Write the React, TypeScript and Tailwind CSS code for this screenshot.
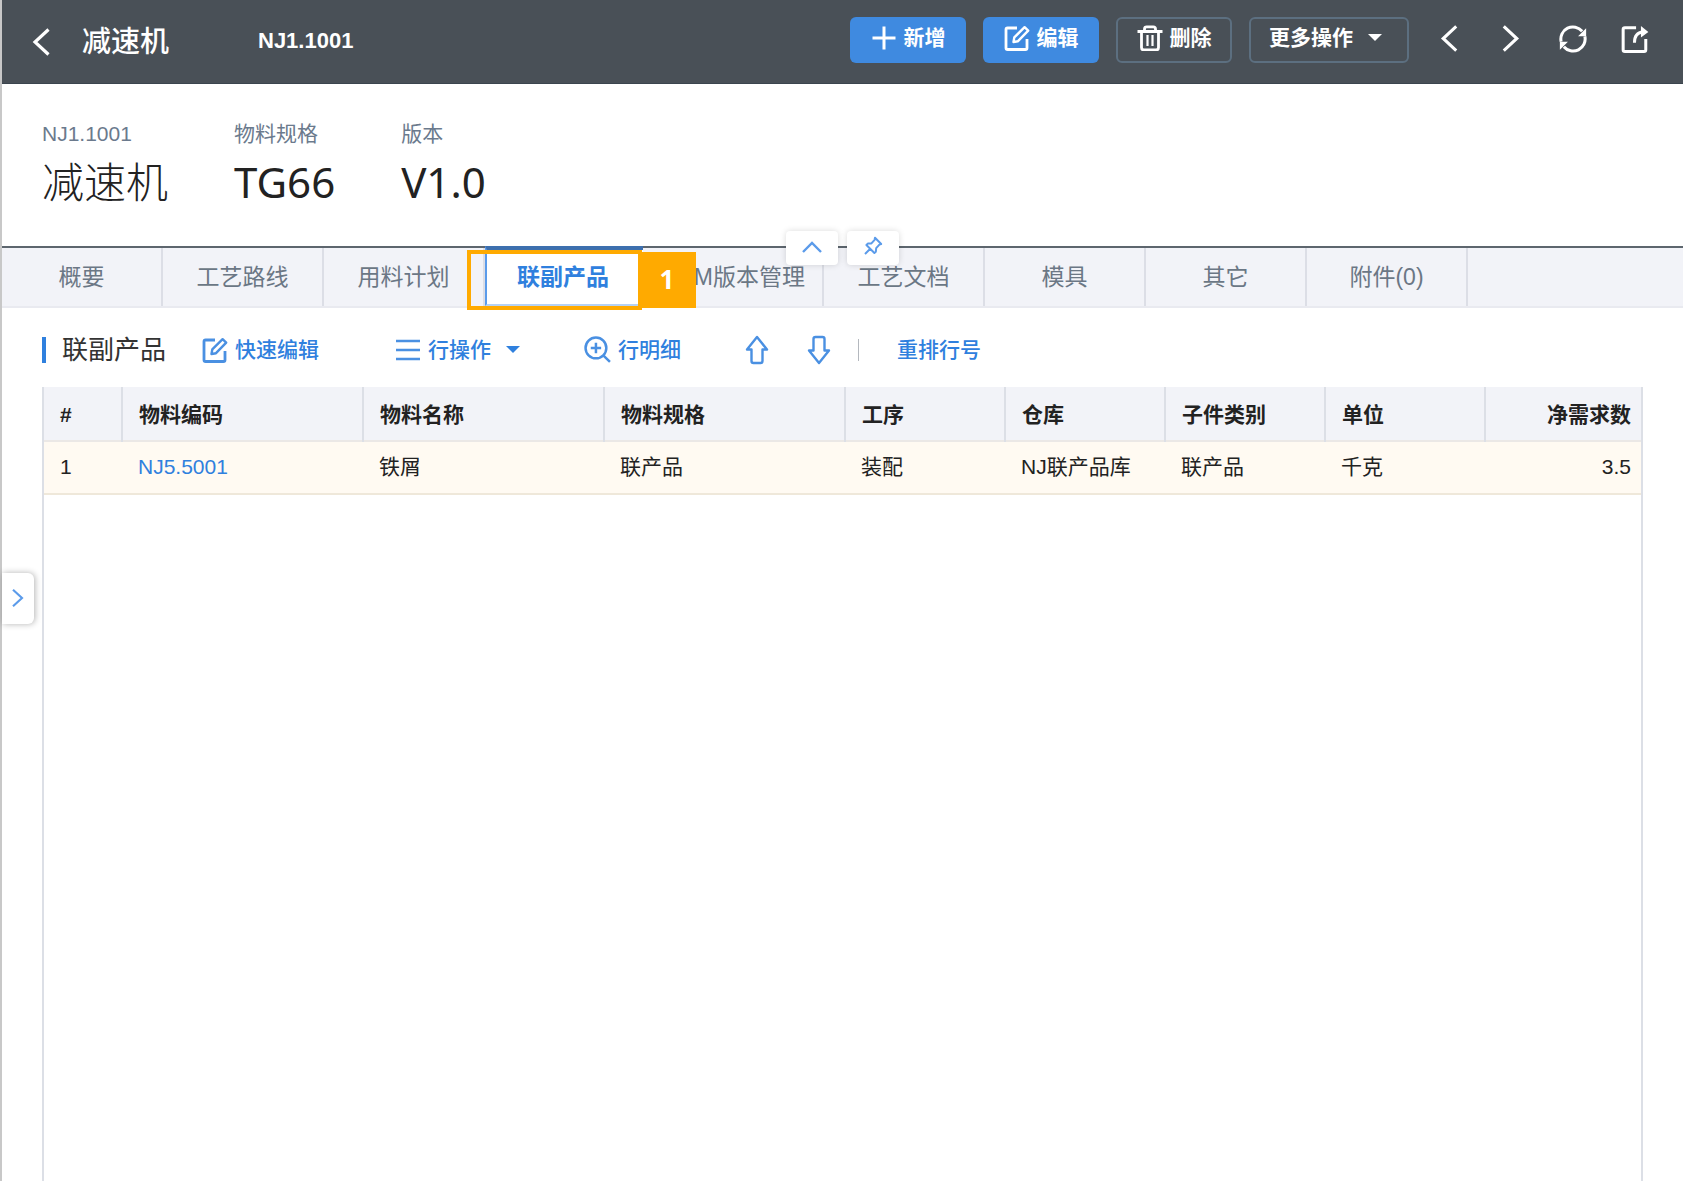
import React from "react";

type IconProps = { className?: string };

const svgBase = {
  fill: "none",
  stroke: "currentColor",
  viewBox: "0 0 26 26",
  "aria-hidden": true,
} as const;

const PlusIcon = ({ className = "" }: IconProps) => (
  <svg {...svgBase} strokeWidth="3" className={`size-[26px] shrink-0 ${className}`}>
    <path d="M13 1.5v23M1.5 13h23" />
  </svg>
);

const EditIcon = ({ className = "" }: IconProps) => (
  <svg {...svgBase} strokeWidth="2.8" strokeLinejoin="round" className={`size-[26px] shrink-0 ${className}`}>
    <path d="M13 3H3.6Q2 3 2 4.600V22.900Q2 24.500 3.600 24.500H21.400Q23 24.500 23 22.900V14" />
    <path d="M9.500 17l.8-4.600L20.600 2.200l3.600 3.400L14 16.200z" strokeWidth="2.400" />
  </svg>
);

const TrashIcon = ({ className = "" }: IconProps) => (
  <svg {...svgBase} strokeWidth="2.8" strokeLinejoin="round" className={`size-[26px] shrink-0 ${className}`}>
    <path d="M0.500 6.500h25M7.500 6V4Q7.500 1.800 9.700 1.800h6.600q2.200 0 2.200 2.200v2M4.500 7v15.500Q4.500 25 7 25h12q2.500 0 2.500-2.500V7" />
    <path d="M10.500 10v11M15.500 10v11" strokeWidth="2.200" />
  </svg>
);

const ChevronLeft = ({ className = "" }: IconProps) => (
  <svg {...svgBase} viewBox="0 0 18 28" strokeWidth="3.2" className={`shrink-0 ${className}`}>
    <path d="M16.500 1.500L3 14l13.500 12.500" />
  </svg>
);

const ChevronRight = ({ className = "" }: IconProps) => (
  <svg {...svgBase} viewBox="0 0 18 28" strokeWidth="3.2" className={`shrink-0 ${className}`}>
    <path d="M1.500 1.500L15 14 1.500 26.500" />
  </svg>
);

const RefreshIcon = ({ className = "" }: IconProps) => (
  <svg {...svgBase} strokeWidth="2.800" className={`size-[28px] shrink-0 ${className}`}>
    <path d="M2 15.500A11.200 11.200 0 0 1 21.500 5.800M24 10.500A11.200 11.200 0 0 1 4.500 20.200" />
    <path d="M25.200 3v7.500h-7.500zM.8 23v-7.500h7.500z" fill="currentColor" stroke="none" />
  </svg>
);

const ShareIcon = ({ className = "" }: IconProps) => (
  <svg {...svgBase} strokeWidth="2.800" strokeLinejoin="round" className={`size-[28px] shrink-0 ${className}`}>
    <path d="M14 2.500H3.600Q2 2.500 2 4.100V22.900Q2 24.500 3.600 24.500H21.400Q23 24.500 23 22.900V13" />
    <path d="M12.500 16.500q0-9.500 8-10" />
    <path d="M18.500 1l6.900 5.500-6.900 5.200z" fill="currentColor" stroke="none" />
  </svg>
);

const ListIcon = ({ className = "" }: IconProps) => (
  <svg {...svgBase} strokeWidth="2.400" className={`size-[26px] shrink-0 ${className}`}>
    <path d="M1 4h24M1 13h24M1 22h24" />
  </svg>
);

const DetailIcon = ({ className = "" }: IconProps) => (
  <svg {...svgBase} strokeWidth="2.400" className={`size-[27px] shrink-0 ${className}`}>
    <circle cx="11.500" cy="11.500" r="10" />
    <path d="M18.800 18.800l6.200 6.200M11.500 6.500v10M6.500 11.500h10" />
  </svg>
);

const ArrowUpIcon = ({ className = "" }: IconProps) => (
  <svg {...svgBase} viewBox="0 0 24 30" strokeWidth="2.400" strokeLinejoin="round" className={`h-[30px] w-6 shrink-0 ${className}`}>
    <path d="M12 2L22 14.500h-4.500V26q0 2-2 2h-7q-2 0-2-2V14.500H2z" />
  </svg>
);

const PinIcon = ({ className = "" }: IconProps) => (
  <svg {...svgBase} viewBox="0 0 20 20" strokeWidth="2" strokeLinejoin="round" className={`size-5 shrink-0 ${className}`}>
    <path d="M12 1.800l6.200 6.200-1.800.6-3.200 3.600-.4 3.600-1.400 1.200-8-8 1.400-1.400 3.600-.2 3.200-3.600zM7 13l-5 5" />
  </svg>
);

const Caret = ({ className = "" }: IconProps) => (
  <svg viewBox="0 0 14 7" fill="currentColor" aria-hidden className={`h-[7px] w-3.5 shrink-0 ${className}`}>
    <path d="M0 0h14L7 7z" />
  </svg>
);

const tabs = [
  { label: "概要" },
  { label: "工艺路线" },
  { label: "用料计划" },
  { label: "联副产品", active: true },
  { label: "M版本管理", wide: true },
  { label: "工艺文档" },
  { label: "模具" },
  { label: "其它" },
  { label: "附件(0)" },
];

const columns = [
  { title: "#", value: "1", width: "w-[78px]" },
  { title: "物料编码", value: "NJ5.5001", width: "w-[241px]", link: true },
  { title: "物料名称", value: "铁屑", width: "w-[241px]" },
  { title: "物料规格", value: "联产品", width: "w-[241px]" },
  { title: "工序", value: "装配", width: "w-40" },
  { title: "仓库", value: "NJ联产品库", width: "w-40" },
  { title: "子件类别", value: "联产品", width: "w-40" },
  { title: "单位", value: "千克", width: "w-40" },
  { title: "净需求数", value: "3.5", width: "", right: true },
];

const facts = [
  { label: "NJ1.1001", value: "减速机", weight: "font-light" },
  { label: "物料规格", value: "TG66", weight: "font-normal" },
  { label: "版本", value: "V1.0", weight: "font-normal" },
];

function Header() {
  return (
    <header className="flex h-[84px] items-center border-b border-[#3b454e] bg-[#495057] pr-[34px] pl-[30px] text-white">
      <button type="button" aria-label="返回" className="mr-8">
        <ChevronLeft className="h-7 w-[18px]" />
      </button>
      <h1 className="w-44 text-[29px] leading-9 font-medium">减速机</h1>
      <span className="pb-0.5 text-[22px] leading-7 font-bold">NJ1.1001</span>
      <div className="ml-auto flex items-center pb-1 text-[21px] leading-6 font-bold">
        <button type="button" className="mr-[17px] flex h-[46px] w-[116px] items-center justify-center gap-[7px] rounded-md bg-[#3f8ae0] pb-1">
          <PlusIcon />
          新增
        </button>
        <button type="button" className="mr-[17px] flex h-[46px] w-[116px] items-center justify-center gap-[7px] rounded-md bg-[#3f8ae0] pb-1">
          <EditIcon />
          编辑
        </button>
        <button type="button" className="mr-[17px] flex h-[46px] w-[116px] items-center justify-center gap-[7px] rounded-md border-2 border-[#5c6f80] pb-1">
          <TrashIcon />
          删除
        </button>
        <button type="button" className="flex h-[46px] w-40 items-center gap-[15px] rounded-md border-2 border-[#5c6f80] pb-1 pl-[18px]">
          更多操作
          <Caret />
        </button>
        <div className="ml-[31px] flex items-center pb-0.5">
          <button type="button" aria-label="上一条">
            <ChevronLeft className="h-[27px] w-[18px]" />
          </button>
          <button type="button" aria-label="下一条" className="ml-11">
            <ChevronRight className="h-[27px] w-[18px]" />
          </button>
          <button type="button" aria-label="刷新" className="ml-[39px]">
            <RefreshIcon />
          </button>
          <button type="button" aria-label="在新窗口打开" className="ml-[34px]">
            <ShareIcon />
          </button>
        </div>
      </div>
    </header>
  );
}

function Summary() {
  return (
    <section className="relative h-[162px] pt-9 pl-10">
      <dl className="flex gap-[66px]">
        {facts.map((f) => (
          <div key={f.label}>
            <dt className="text-[21px] leading-7 text-[#6b7a8d]">{f.label}</dt>
            <dd className={`mt-2 font-['Noto_Sans','Noto_Sans_CJK_SC',sans-serif] text-[42px] leading-[52px] text-[#222] ${f.weight}`}>{f.value}</dd>
          </div>
        ))}
      </dl>
      <div className="absolute -bottom-[19px] left-[784px] z-10 flex gap-[9px] text-[#5b9bea]">
        <button type="button" aria-label="收起" className="grid h-[34px] w-[52px] place-items-center rounded bg-white pb-0.5 shadow-[0_0_6px_rgba(0,0,0,0.15)]">
          <svg viewBox="0 0 20 12" fill="none" stroke="currentColor" strokeWidth="2.400" aria-hidden className="h-3 w-5">
            <path d="M1 11l9-9 9 9" />
          </svg>
        </button>
        <button type="button" aria-label="固定" className="grid h-[34px] w-[52px] place-items-center rounded bg-white pb-1 shadow-[0_0_6px_rgba(0,0,0,0.15)]">
          <PinIcon />
        </button>
      </div>
    </section>
  );
}

function Tabs() {
  return (
    <nav role="tablist" className="flex h-[62px] border-t-2 border-b-2 border-t-[#5d666e] border-b-[#e9eaf0] bg-[#f2f3f8] text-[23px] text-[#6b7785]">
      {tabs.map((t) =>
        t.active ? (
          <div key={t.label} className="relative w-[158px] shrink-0">
            <button type="button" role="tab" aria-selected="true" className="-mt-0.5 h-[60px] w-full border-t-4 border-b-2 border-l-2 border-t-[#3d6fae] border-b-[#b5d2f5] border-l-[#5b9bea] bg-white pr-1 font-bold text-[#2f80de]">
              {t.label}
            </button>
            <div className="pointer-events-none absolute top-0.5 -left-[18px] h-[60px] w-[175px] border-4 border-[#ffaa00]" />
            <div className="pointer-events-none absolute top-1 left-[153px] grid h-14 w-[58px] place-items-center bg-[#ffaa00] pb-0.5 font-['Open_Sans',sans-serif] text-[26px] font-bold text-white">
              1
            </div>
          </div>
        ) : (
          <button
            key={t.label}
            type="button"
            role="tab"
            aria-selected="false"
            className={`shrink-0 border-r-2 border-[#dcdee6] ${t.wide ? "w-[181px] pr-[17px] text-right" : "w-[161px]"}`}
          >
            {t.label}
          </button>
        ),
      )}
    </nav>
  );
}

function Toolbar() {
  return (
    <div className="flex h-[79px] items-center pt-1 pl-10 text-[21px] leading-7 text-[#2f80de]">
      <span className="mr-4 h-[26px] w-1 bg-[#2f80de]" />
      <h2 className="mr-9 text-[26px] leading-8 text-[#333]">联副产品</h2>
      <button type="button" className="mr-[76px] flex items-center gap-[7px] font-medium">
        <EditIcon className="text-[#4a90e2]" />
        快速编辑
      </button>
      <button type="button" className="mr-16 flex items-center gap-[7px] font-medium">
        <ListIcon className="text-[#4a90e2]" />
        行操作
        <Caret className="ml-2" />
      </button>
      <button type="button" className="mr-16 flex items-center gap-[7px] font-medium">
        <DetailIcon className="text-[#4a90e2]" />
        行明细
      </button>
      <button type="button" aria-label="上移" className="mr-[38px] text-[#4a90e2]">
        <ArrowUpIcon />
      </button>
      <button type="button" aria-label="下移" className="text-[#4a90e2]">
        <ArrowUpIcon className="rotate-180" />
      </button>
      <span className="mr-[38px] ml-[27px] h-[22px] w-px bg-[#b4b8be]" />
      <button type="button" className="font-medium">重排行号</button>
    </div>
  );
}

function ProductTable() {
  return (
    <div className="mr-10 ml-10 flex-1 border-x-2 border-[#dcdfe6]">
      <table className="w-full table-fixed border-collapse text-[21px] leading-7 text-[#222]">
        <thead>
          <tr className="h-[54px] border-b-2 border-[#ebe8e6] bg-[#f2f3f8]">
            {columns.map((c) => (
              <th
                key={c.title}
                scope="col"
                className={`border-r-2 border-[#dcdfe6] pt-0.5 font-bold whitespace-nowrap last:border-r-0 ${c.width} ${c.right ? "pr-2.5 text-right" : "pl-4 text-left"}`}
              >
                {c.title}
              </th>
            ))}
          </tr>
        </thead>
        <tbody>
          <tr className="h-[53px] border-b-2 border-[#efe8da] bg-[#fffaf2]">
            {columns.map((c) => (
              <td key={c.title} className={`pb-0.5 whitespace-nowrap ${c.right ? "pr-2.5 text-right" : "pl-4"}`}>
                {c.link ? (
                  <a href="#item" className="text-[#2f80de]">{c.value}</a>
                ) : (
                  c.value
                )}
              </td>
            ))}
          </tr>
        </tbody>
      </table>
    </div>
  );
}

export default function App() {
  return (
    <main className="relative flex min-h-screen flex-col border-l-2 border-[#c8c8c8] bg-white font-['Liberation_Sans','Noto_Sans_CJK_SC',sans-serif]">
      <Header />
      <Summary />
      <Tabs />
      <Toolbar />
      <ProductTable />
      <button
        type="button"
        aria-label="展开侧栏"
        className="absolute top-[573px] left-0 grid h-[51px] w-8 place-items-center rounded-r-md bg-white pb-0.5 text-[#5b9bea] shadow-[1px_0_6px_rgba(0,0,0,0.3)]"
      >
        <ChevronRight className="h-5 w-3" />
      </button>
    </main>
  );
}
